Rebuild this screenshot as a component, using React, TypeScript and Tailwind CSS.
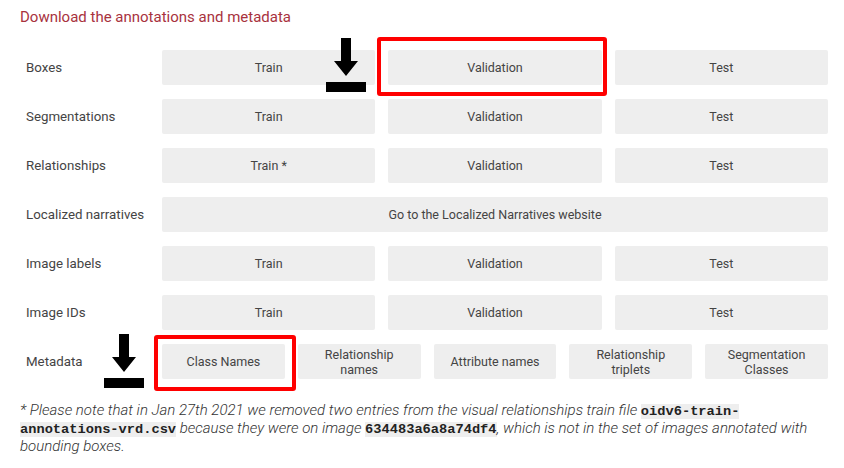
import React from "react";

const Btn = ({ children }: { children: React.ReactNode }) => (
  <div className="flex h-[35px] items-center justify-center rounded-[2px] bg-[#eeeeee] text-center text-[12.5px] leading-[15px] text-[#444]">
    {children}
  </div>
);

const Arrow = () => (
  <svg width="40" height="54" viewBox="0 0 40 54">
    <polygon points="15,0 25,0 25,23 32,23 20,38 8,23 15,23" fill="#000" />
    <rect x="0" y="44" width="40" height="10" fill="#000" />
  </svg>
);

const rows: { label: string; items: string[] }[] = [
  { label: "Boxes", items: ["Train", "Validation", "Test"] },
  { label: "Segmentations", items: ["Train", "Validation", "Test"] },
  { label: "Relationships", items: ["Train *", "Validation", "Test"] },
];
const rows2: { label: string; items: string[] }[] = [
  { label: "Image labels", items: ["Train", "Validation", "Test"] },
  { label: "Image IDs", items: ["Train", "Validation", "Test"] },
];

const Row = ({ label, children }: { label: string; children: React.ReactNode }) => (
  <div className="flex items-center">
    <div className="w-[162px] shrink-0 pl-[26px] text-[13.3px] text-[#444]">{label}</div>
    {children}
  </div>
);

const Code = ({ children }: { children: React.ReactNode }) => (
  <code
    className="bg-[#eeeeee] text-[13.7px] leading-[17px] font-bold not-italic text-[#222]"
    style={{ fontFamily: '"Liberation Mono", monospace' }}
  >
    {children}
  </code>
);

export default function App() {
  return (
    <div
      className="relative h-[468px] w-[844px] overflow-hidden bg-white"
      style={{ fontFamily: "Roboto, 'Noto Sans', sans-serif" }}
    >
      <div className="pl-[20px] pt-[7px] text-[15px] leading-[20px] text-[#a8323e]">
        Download the annotations and metadata
      </div>
      <div className="mt-[23px] flex w-[828px] flex-col gap-[14px]">
        {rows.map((r) => (
          <Row key={r.label} label={r.label}>
            <div className="grid w-[666px] grid-cols-3 gap-[13px]">
              {r.items.map((t, i) => (
                <Btn key={i}>{t}</Btn>
              ))}
            </div>
          </Row>
        ))}
        <Row label="Localized narratives">
          <div className="w-[666px]">
            <Btn>Go to the Localized Narratives website</Btn>
          </div>
        </Row>
        {rows2.map((r) => (
          <Row key={r.label} label={r.label}>
            <div className="grid w-[666px] grid-cols-3 gap-[13px]">
              {r.items.map((t, i) => (
                <Btn key={i}>{t}</Btn>
              ))}
            </div>
          </Row>
        ))}
        <Row label="Metadata">
          <div className="grid w-[666px] grid-cols-5 gap-[13px]">
            <Btn>Class Names</Btn>
            <Btn>
              Relationship
              <br />
              names
            </Btn>
            <Btn>Attribute names</Btn>
            <Btn>
              Relationship
              <br />
              triplets
            </Btn>
            <Btn>
              Segmentation
              <br />
              Classes
            </Btn>
          </div>
        </Row>
      </div>
      <p className="mt-[23px] w-[820px] pl-[20px] text-[15px] font-light italic leading-[17px] text-[#333]">
        * Please note that in Jan 27th 2021 we removed two entries from the visual relationships train file{" "}
        <Code>oidv6-train-annotations-vrd.csv</Code> because they were on image <Code>634483a6a8a74df4</Code>, which is not
        in the set of images annotated with bounding boxes.
      </p>

      <div className="absolute left-[377px] top-[37px] h-[59px] w-[230px] rounded-[3px] border-[4px] border-[#ff0000]" />
      <div className="absolute left-[154px] top-[335px] h-[56px] w-[142px] rounded-[3px] border-[4px] border-[#ff0000]" />
      <div className="absolute left-[326px] top-[38px]">
        <Arrow />
      </div>
      <div className="absolute left-[104px] top-[334px]">
        <Arrow />
      </div>
    </div>
  );
}
